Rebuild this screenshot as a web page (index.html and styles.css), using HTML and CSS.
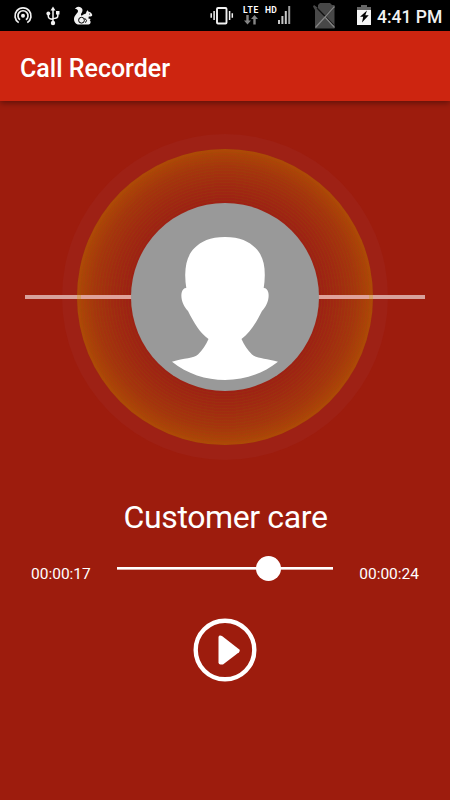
FILE: index.html
```
<!DOCTYPE html>
<html lang="en">
<head>
<meta charset="utf-8">
<title>Call Recorder</title>
<link rel="stylesheet" href="styles.css">
</head>
<body>
<main class="screen">
  <div class="status">
    <svg class="hotspot" width="20" height="20" viewBox="0 0 20 20" fill="none" stroke="#f2f2f2" stroke-width="1.7">
      <path d="M5.7 16.6A8 8 0 1 1 14.3 16.6M7.1 13.8A5 5 0 1 1 12.9 13.8"/>
      <circle cx="10" cy="9.8" r="2" fill="#f2f2f2" stroke="none"/>
    </svg>
    <svg class="usb" width="14" height="20" viewBox="0 0 14 20" fill="none" stroke="#f2f2f2" stroke-width="1.5">
      <path d="M7 3v13M2.3 8v2.2Q2.3 13 7 13.3M11.8 7v3Q11.8 12.4 7 12.6"/>
      <path d="M7 .5L9.5 4.5H4.5zM10 5h3.5v3.5H10z" fill="#f2f2f2" stroke="none"/>
      <circle cx="2.3" cy="7.5" r="1.9" fill="#f2f2f2" stroke="none"/>
      <circle cx="7" cy="17" r="2.2" fill="#f2f2f2" stroke="none"/>
    </svg>
    <svg class="squirrel" width="20" height="20" viewBox="0 0 20 20">
      <path fill="#f2f2f2" d="M5.4.7C9.5 1 10.7 4.1 8.4 7.3c-.7 1.2-.6 2.1.4 2.5C10.3 8 12 8.1 13 7.5c.1-1.5.8-2.8 1.9-3.2l.3 1.3c1.9.3 3.3 1.5 4.1 3.4-.2 1.1-1.4 1.6-3.5 1.5l-.4 2 2.3.6-1 1.1c1.7 1.4.9 3.9-1.2 4.4H6.1C2.4 18.3.3 14.8 1.2 11.4 2 8.8 5.9 6.4 4.8 4.3 4.2 3.2 2.9 3 2 3.1 2.5 1.7 3.8.8 5.4.7z"/>
      <circle cx="8.5" cy="14.2" r="2.9" fill="none" stroke="#000" stroke-width="1"/>
      <path d="M11.7 12.2l1.8 2.2-1 2.3" fill="none" stroke="#000"/>
      <circle cx="16.5" cy="8" r=".5"/>
    </svg>
    <svg class="vibrate" width="24" height="20" viewBox="0 0 24 20" fill="none" stroke="#f2f2f2" stroke-width="1.5">
      <rect x="7" y="2" width="9.5" height="15.5" rx="1" stroke-width="1.9"/>
      <path d="M4.1 5v9M1.2 7.3v4.4M19.6 5v9M22.3 7.3v4.4"/>
    </svg>
    <div class="lte"><span>LTE</span>
      <svg width="14" height="10" viewBox="0 0 14 10" fill="#858585"><path d="M2.3 0h2.4v5.5H7L3.5 9.6 0 5.5h2.3zM9.3 9.6h2.4V4.1H14L10.5 0 7 4.1h2.3z"/></svg>
    </div>
    <span class="hd">HD</span>
    <svg class="bars" width="13" height="18" viewBox="0 0 13 18">
      <path fill="#c8c8c8" d="M0 14h2v4H0zM3.4 10h2v8h-2zM6.8 5h2v13h-2z"/><path fill="#a0a0a0" d="M10.2 0h2v18h-2z"/>
    </svg>
    <svg class="nosim" width="24" height="26" viewBox="0 0 24 26">
      <path fill="#484848" d="M7 0h10l2 2h2.500v23.500H2V7L0 3.500 1 2l4 3V2z"/>
      <path d="M4 5L20.500 22M20.500 5L12 13.500" stroke="#111" stroke-width="1.300"/>
      <path d="M2.500 24.500L21.500 3.500M12 14l9.500 10.500" fill="none" stroke="#858585" stroke-width="1.200"/>
    </svg>
    <svg class="battery" width="15" height="20" viewBox="0 0 15 20">
      <path fill="#666" d="M4 0h6v2h4v3H0V2h4z"/><path fill="#f5f5f5" d="M0 5h14v15H0z"/>
      <path d="M10 5.5L3 11.7h3.2L5 17.5l6.7-7.3H8.3z"/>
    </svg>
    <span class="clock">4:41 PM</span>
  </div>
  <header class="appbar"><h1>Call Recorder</h1></header>
  <section class="visualizer">
    <div class="halo"></div>
    <div class="axis"></div>
    <div class="glow"></div>
    <div class="avatar">
      <svg width="188" height="188" viewBox="131 203 188 188" fill="#fff">
        <path d="M225 237C210 237 201 241.5 194.5 248C188 254.5 185.5 263 185.2 275Q185.3 282 186.3 288Q183 287.8 181.7 292.5C180.3 299 183.5 306.5 188 311C194 323 200 333 208.5 339C206 345 202.5 350 198 354.5C194 358.5 184 358 172 361.7C202 386 248 386 278 361.7C266 358 256 358.5 252 354.5C247.5 350 244 345 241.5 339C250 333 256 323 262 311C266.5 306.5 269.7 299 268.3 292.5Q267 287.8 263.7 288Q264.7 282 264.8 275C264.8 263 262 254.5 255.5 248C249 241.5 240 237 225 237Z"/>
      </svg>
    </div>
  </section>
  <h2 class="caller">Customer care</h2>
  <div class="progress">
    <span class="time">00:00:17</span>
    <div class="track"><div class="thumb"></div></div>
    <span class="time">00:00:24</span>
  </div>
  <svg class="play" width="64" height="64" viewBox="0 0 64 64">
    <circle cx="32" cy="32" r="29.3" fill="none" stroke="#fff" stroke-width="4.4"/>
    <path fill="#fff" d="M25.500 19Q26 16.800 29 18L46 31.200Q47.800 32.700 46 34.200L30 46.500H27.500Q25.500 46.500 25.500 44.500Z"/>
  </svg>
</main>
</body>
</html>
```
FILE: styles.css
```
* { box-sizing: border-box; }
body { margin: 0; background: #9d1c0d; font-family: Roboto, sans-serif; color: #fff; }
.screen { width: 450px; height: 800px; display: flex; flex-direction: column; align-items: center; overflow: hidden; }
.status { width: 450px; height: 31px; flex: none; background: #000; display: flex; align-items: flex-start; }
.status svg { display: block; flex: none; }
.hotspot { margin: 6px 0 0 13px; }
.usb { margin: 6px 0 0 13px; }
.squirrel { margin: 6px 0 0 13px; }
.vibrate { margin: 6px 0 0 117px; }
.lte { width: 18px; margin: 6px 0 0 9px; font: 700 8.5px/9px Roboto, sans-serif; letter-spacing: .8px; }
.lte span { display: block; white-space: nowrap; }
.lte svg { margin: 0 0 0 1px; }
.hd { width: 13px; margin: 6px 0 0 4px; font: 700 8.5px/9px Roboto, sans-serif; letter-spacing: .3px; white-space: nowrap; }
.bars { margin: 6px 0 0 0; }
.nosim { margin: 3px 0 0 22px; }
.battery { margin: 5px 0 0 20px; }
.clock { margin: 5px 0 0 5px; font: 500 17.5px/24px Roboto, sans-serif; color: #f2f2f2; white-space: nowrap; }
.appbar { width: 450px; height: 70px; flex: none; background: #cd2510; display: flex; align-items: center; padding: 5px 0 0 20px; box-shadow: 0 2px 6px rgba(0, 0, 0, .4); z-index: 1; }
.appbar h1 { margin: 0; font-size: 25px; line-height: 30px; font-weight: 500; }
.visualizer { width: 450px; height: 326px; flex: none; margin-top: 33px; display: grid; place-items: center; }
.visualizer > div { grid-area: 1 / 1; }
.halo { width: 326px; height: 326px; border-radius: 50%; background: #9e2115; }
.axis { width: 400px; height: 4px; z-index: 0; background: linear-gradient(90deg, #d8a19b 52px, #d7a068 52px 56px, #dfa29a 56px 344px, #d7a068 344px 348px, #d8a19b 348px); }
.glow {
  width: 296px; height: 296px; border-radius: 50%;
  background:
    repeating-radial-gradient(circle, rgba(140, 90, 0, .15) 0 1px, transparent 1.5px 3px),
    radial-gradient(circle closest-side, rgba(180, 90, 0, 0) 64%, rgba(180, 90, 0, .14) 75%, rgba(180, 90, 0, .36) 88%, rgba(182, 90, 0, .6) 97%, rgba(182, 92, 0, .72) 100%);
}
.avatar { width: 188px; height: 188px; border-radius: 50%; background: #999; z-index: 1; }
.avatar svg { display: block; }
.caller { margin: 36px 0 0 1px; font-size: 32px; line-height: 42px; letter-spacing: -.38px; font-weight: 400; }
.progress { width: 388px; height: 30px; margin-top: 16px; display: flex; justify-content: space-between; }
.time { font-size: 15.5px; line-height: 20px; margin-top: 10px; }
.track { width: 216px; height: 3px; margin-top: 13px; background: linear-gradient(#fff 67%, #dfaea9 67%); display: flex; align-items: center; padding-left: 139px; }
.thumb { width: 25px; height: 25px; flex: none; border-radius: 50%; background: #fff; }
.play { flex: none; margin-top: 34px; }
```
